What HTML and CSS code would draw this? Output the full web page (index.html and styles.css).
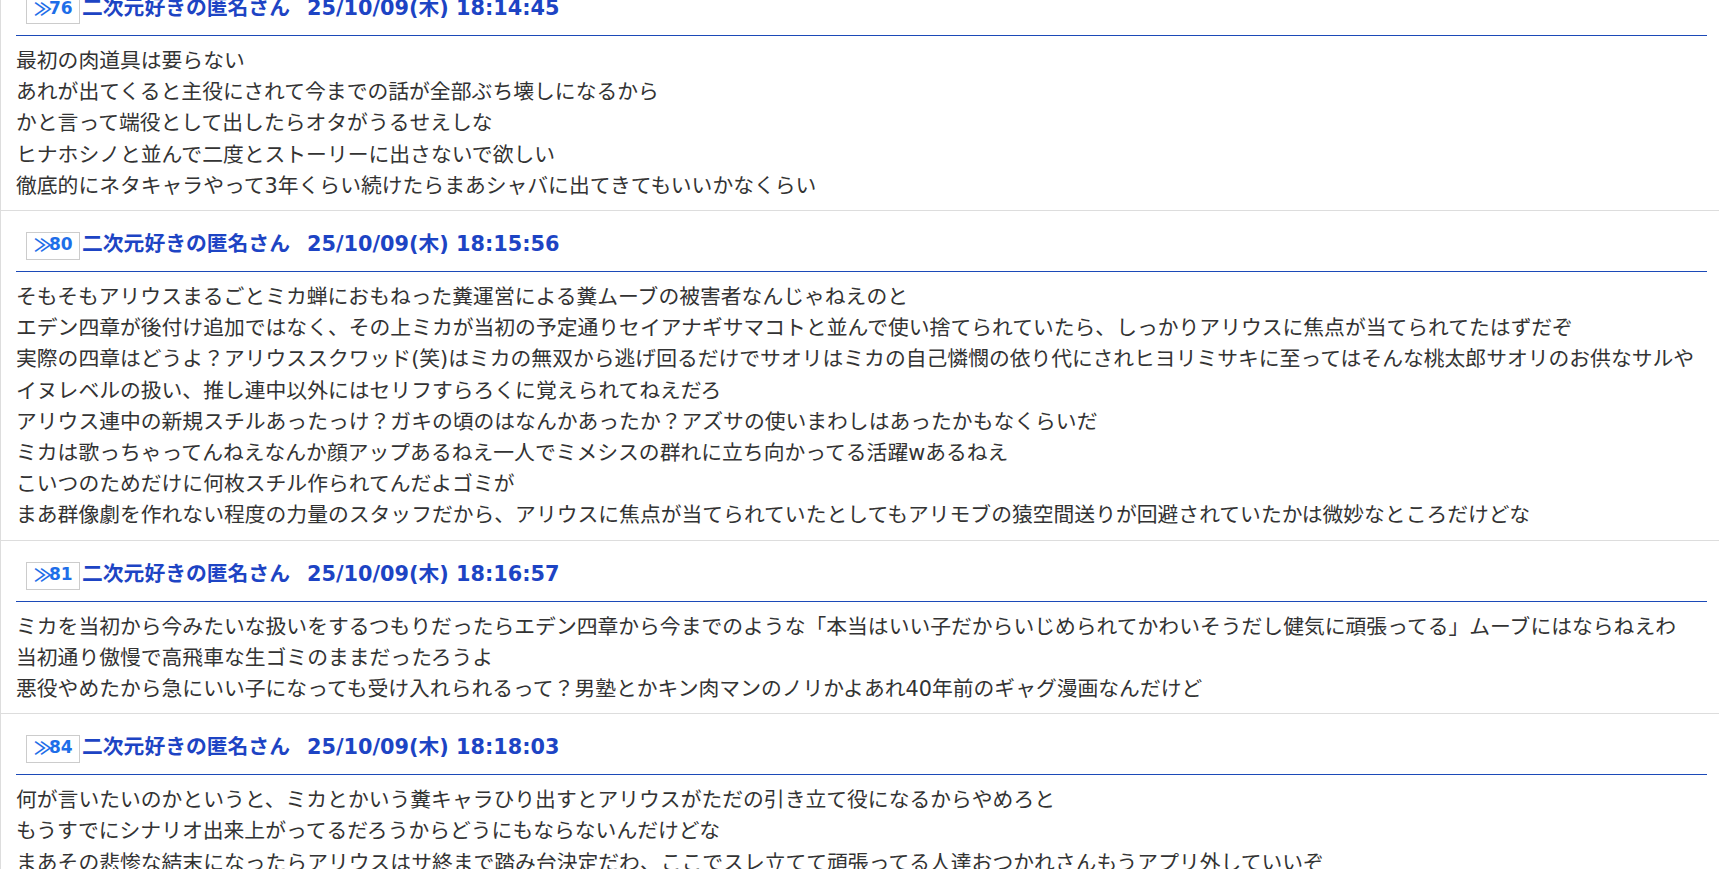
FILE: index.html
```html
<!DOCTYPE html>
<html lang="ja">
<head>
<meta charset="utf-8">
<title>スレッド</title>
<link rel="stylesheet" href="styles.css">
</head>
<body>
<div class="thread">
  <article class="post">
    <header class="post-head">
      <span class="res-no"><span class="mark">≫</span>76</span>
      <span class="name">二次元好きの匿名さん</span>
      <span class="date">25/10/09(木) 18:14:45</span>
    </header>
    <div class="post-body">
      <p>最初の肉道具は要らない</p>
      <p>あれが出てくると主役にされて今までの話が全部ぶち壊しになるから</p>
      <p>かと言って端役として出したらオタがうるせえしな</p>
      <p>ヒナホシノと並んで二度とストーリーに出さないで欲しい</p>
      <p>徹底的にネタキャラやって3年くらい続けたらまあシャバに出てきてもいいかなくらい</p>
    </div>
  </article>
  <article class="post">
    <header class="post-head">
      <span class="res-no"><span class="mark">≫</span>80</span>
      <span class="name">二次元好きの匿名さん</span>
      <span class="date">25/10/09(木) 18:15:56</span>
    </header>
    <div class="post-body">
      <p>そもそもアリウスまるごとミカ蝉におもねった糞運営による糞ムーブの被害者なんじゃねえのと</p>
      <p>エデン四章が後付け追加ではなく、その上ミカが当初の予定通りセイアナギサマコトと並んで使い捨てられていたら、しっかりアリウスに焦点が当てられてたはずだぞ</p>
      <p>実際の四章はどうよ？アリウススクワッド(笑)はミカの無双から逃げ回るだけでサオリはミカの自己憐憫の依り代にされヒヨリミサキに至ってはそんな桃太郎サオリのお供なサルやイヌレベルの扱い、推し連中以外にはセリフすらろくに覚えられてねえだろ</p>
      <p>アリウス連中の新規スチルあったっけ？ガキの頃のはなんかあったか？アズサの使いまわしはあったかもなくらいだ</p>
      <p>ミカは歌っちゃってんねえなんか顔アップあるねえ一人でミメシスの群れに立ち向かってる活躍wあるねえ</p>
      <p>こいつのためだけに何枚スチル作られてんだよゴミが</p>
      <p>まあ群像劇を作れない程度の力量のスタッフだから、アリウスに焦点が当てられていたとしてもアリモブの猿空間送りが回避されていたかは微妙なところだけどな</p>
    </div>
  </article>
  <article class="post">
    <header class="post-head">
      <span class="res-no"><span class="mark">≫</span>81</span>
      <span class="name">二次元好きの匿名さん</span>
      <span class="date">25/10/09(木) 18:16:57</span>
    </header>
    <div class="post-body">
      <p>ミカを当初から今みたいな扱いをするつもりだったらエデン四章から今までのような「本当はいい子だからいじめられてかわいそうだし健気に頑張ってる」ムーブにはならねえわ</p>
      <p>当初通り傲慢で高飛車な生ゴミのままだったろうよ</p>
      <p>悪役やめたから急にいい子になっても受け入れられるって？男塾とかキン肉マンのノリかよあれ40年前のギャグ漫画なんだけど</p>
    </div>
  </article>
  <article class="post">
    <header class="post-head">
      <span class="res-no"><span class="mark">≫</span>84</span>
      <span class="name">二次元好きの匿名さん</span>
      <span class="date">25/10/09(木) 18:18:03</span>
    </header>
    <div class="post-body">
      <p>何が言いたいのかというと、ミカとかいう糞キャラひり出すとアリウスがただの引き立て役になるからやめろと</p>
      <p>もうすでにシナリオ出来上がってるだろうからどうにもならないんだけどな</p>
      <p>まあその悲惨な結末になったらアリウスはサ終まで踏み台決定だわ、ここでスレ立てて頑張ってる人達おつかれさんもうアプリ外していいぞ</p>
    </div>
  </article>
</div>
</body>
</html>
```
FILE: styles.css
```css
html, body {
  margin: 0;
  padding: 0;
  background: #ffffff;
}

body {
  font-family: "DejaVu Sans", "Noto Sans CJK JP", sans-serif;
  color: #333333;
  overflow: hidden;
}

.thread {
  margin-top: -26px;
}

.post {
  border-top: 1px solid #dddddd;
  border-left: 1px solid #dddddd;
  padding: 21px 12px 8px 15px;
}

.post-head {
  display: flex;
  align-items: flex-start;
  height: 28px;
  padding-bottom: 11px;
  border-bottom: 1px solid #1c4ab8;
}

.res-no {
  box-sizing: border-box;
  flex: none;
  width: 54px;
  height: 28px;
  line-height: 22px;
  margin-left: 10px;
  padding-left: 7px;
  border: 1px solid #cccccc;
  font-size: 17px;
  font-weight: bold;
  color: #1e6ee8;
  white-space: nowrap;
  overflow: visible;
}

.mark {
  font-family: "Noto Sans CJK JP", sans-serif;
  font-size: 18px;
  font-weight: bold;
  vertical-align: top;
  line-height: 23px;
  margin-right: -3px;
}

.name,
.date {
  font-size: 20.8px;
  font-weight: bold;
  line-height: 24px;
  color: #1d44c4;
  white-space: nowrap;
}

.name {
  margin-left: 2px;
}

.date {
  margin-left: 17px;
}

.post-body {
  padding-top: 10px;
  font-size: 20.8px;
  line-height: 31.2px;
}

.post-body p {
  margin: 0;
}
```
